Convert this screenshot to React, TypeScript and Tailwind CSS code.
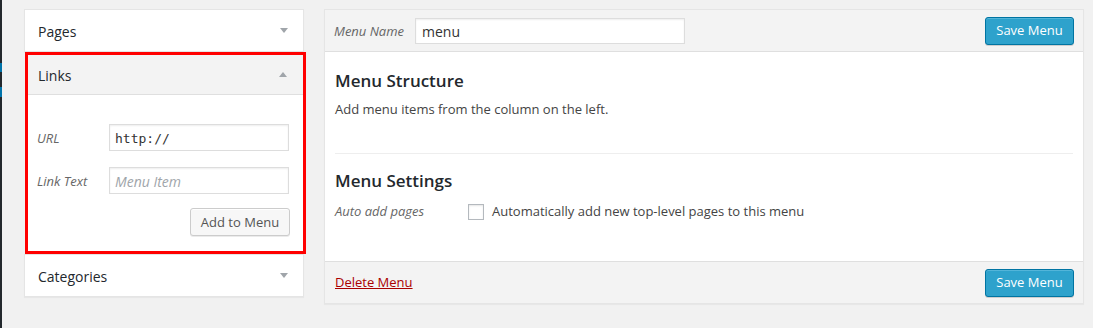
import React from "react";

function Caret({ up = false }: { up?: boolean }) {
  return (
    <span
      className={
        up
          ? "block h-0 w-0 border-x-4 border-b-[5px] border-x-transparent border-b-[#a0a5aa]"
          : "block h-0 w-0 border-x-4 border-t-[5px] border-x-transparent border-t-[#a0a5aa]"
      }
    />
  );
}

function SectionBox({ title }: { title: string }) {
  return (
    <div className="flex h-[43px] items-center justify-between border border-[#e5e5e5] bg-white pl-[13px] pr-[15px] shadow-[0_1px_1px_rgba(0,0,0,0.04)]">
      <span className="pt-[2px] text-[14px] text-[#23282d]">{title}</span>
      <Caret />
    </div>
  );
}

function SaveButton() {
  return (
    <button className="h-[28px] w-[89px] rounded-[3px] border border-[#0074a2] bg-[#2ea2cc] pt-px text-[13px] text-white shadow-[inset_0_1px_0_rgba(120,200,230,0.5),0_1px_0_rgba(0,0,0,0.15)]">
      Save Menu
    </button>
  );
}

export default function App() {
  return (
    <div className="flex h-[328px] w-[1093px] overflow-hidden bg-[#f1f1f1] font-['Open_Sans',sans-serif] text-[13px] text-[#444]">
      {/* admin menu edge */}
      <div className="flex w-[2px] flex-col bg-[#23282d]">
        <div className="h-[63px]" />
        <div className="h-[9px] bg-[#0073aa]" />
        <div className="h-[15px]" />
        <div className="h-[10px] bg-[#0073aa]" />
      </div>

      <div className="flex items-start gap-5 pl-[22px] pt-[9px]">
        {/* left column */}
        <div className="flex w-[280px] flex-col">
          <SectionBox title="Pages" />

          <div className="-mr-[2px] ml-px border-[3px] border-[#ff0000] bg-white">
            <div className="flex h-[40px] items-center justify-between border-b border-[#dfdfdf] bg-[#f3f3f3] pl-[10px] pr-[16px]">
              <span className="pt-px text-[14px] text-[#23282d]">Links</span>
              <Caret up />
            </div>
            <div className="flex h-[156px] flex-col pl-[9px] pr-[14px] pt-[29px]">
              <div className="flex items-center">
                <label className="w-[72px] pt-[3px] italic text-[#666]">URL</label>
                <input
                  defaultValue="http://"
                  className="h-[27px] w-[180px] border border-[#ddd] bg-white px-[5px] pt-px font-['DejaVu_Sans_Mono',monospace] text-[13px] text-[#333] shadow-[inset_0_1px_2px_rgba(0,0,0,0.07)] outline-none"
                />
              </div>
              <div className="mt-4 flex items-center">
                <label className="w-[72px] pt-[3px] italic text-[#666]">Link Text</label>
                <input
                  placeholder="Menu Item"
                  className="h-[27px] w-[180px] border border-[#ddd] bg-white px-[5px] pt-px text-[14px] text-[#333] shadow-[inset_0_1px_2px_rgba(0,0,0,0.07)] outline-none placeholder:italic placeholder:text-[#a0a5aa]"
                />
              </div>
              <div className="-mr-px mt-[14px] flex justify-end">
                <button className="h-[28px] w-[100px] rounded-[3px] border border-[#ccc] bg-[#f7f7f7] pt-px text-[13px] text-[#555] shadow-[inset_0_1px_0_#fff,0_1px_0_rgba(0,0,0,0.08)]">
                  Add to Menu
                </button>
              </div>
            </div>
          </div>

          <SectionBox title="Categories" />
        </div>

        {/* right column */}
        <div className="flex w-[760px] flex-col border border-[#e5e5e5] bg-white shadow-[0_1px_1px_rgba(0,0,0,0.04)]">
          <div className="flex h-[42px] items-center border-b border-[#dfdfdf] bg-[#f3f3f3] pl-[9px] pr-[9px]">
            <label className="w-[81px] pt-[3px] italic text-[#666]">Menu Name</label>
            <input
              defaultValue="menu"
              className="h-[26px] w-[270px] border border-[#ddd] bg-white px-[6px] pt-px text-[14px] text-[#333] shadow-[inset_0_1px_2px_rgba(0,0,0,0.07)] outline-none"
            />
            <div className="ml-auto">
              <SaveButton />
            </div>
          </div>

          <div className="flex h-[209px] flex-col px-[10px] pt-[17px]">
            <h3 className="h-[24px] text-[17px] font-semibold leading-[24px] text-[#23282d]">
              Menu Structure
            </h3>
            <p className="mt-[6px] leading-[20px]">Add menu items from the column on the left.</p>
            <div className="mt-[34px] border-t border-[#eee]" />
            <h3 className="mt-[15px] h-[24px] text-[17px] font-semibold leading-[24px] text-[#23282d]">
              Menu Settings
            </h3>
            <div className="mt-[9px] flex h-[20px] items-center">
              <span className="w-[133px] italic text-[#666]">Auto add pages</span>
              <span className="h-4 w-4 border border-[#b4b9be] bg-white shadow-[inset_0_1px_2px_rgba(0,0,0,0.1)]" />
              <span className="ml-2">Automatically add new top-level pages to this menu</span>
            </div>
          </div>

          <div className="flex h-[42px] items-center justify-between border-t border-[#dfdfdf] bg-[#f3f3f3] pl-[10px] pr-[9px]">
            <a href="#" className="text-[#a00] underline">
              Delete Menu
            </a>
            <SaveButton />
          </div>
        </div>
      </div>
    </div>
  );
}
